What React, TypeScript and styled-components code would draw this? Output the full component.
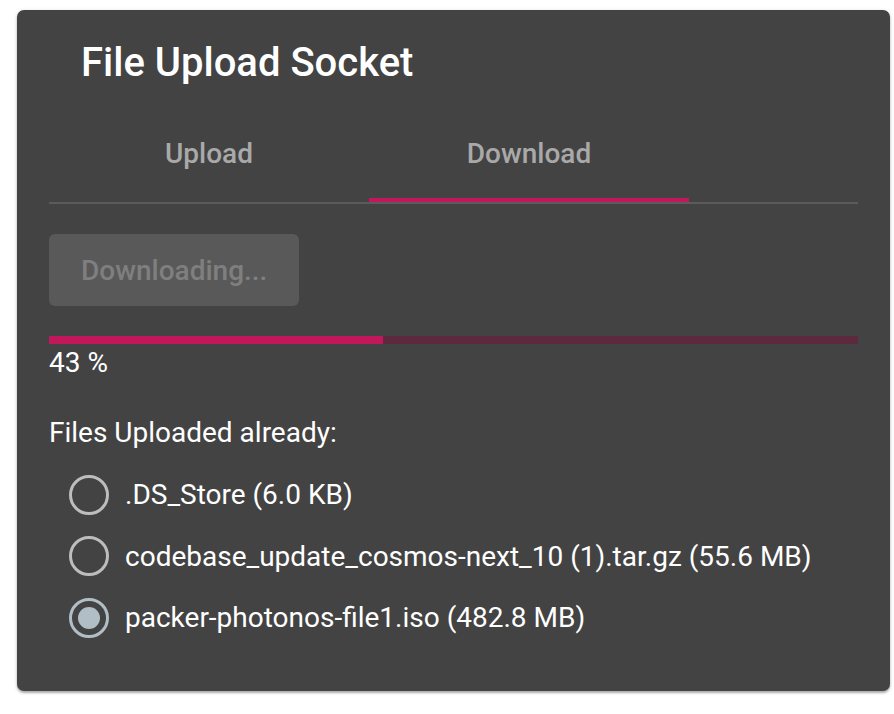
import React from "react";
import styled, { createGlobalStyle } from "styled-components";

const GlobalStyle = createGlobalStyle`
  html, body {
    margin: 0;
    padding: 0;
    background: #ffffff;
  }
  body {
    font-family: Roboto, "Liberation Sans", Arial, sans-serif;
  }
`;

const Page = styled.div`
  padding: 10px 4px 23px 17px;
`;

const Card = styled.div`
  box-sizing: border-box;
  width: 873px;
  height: 681px;
  background: #434343;
  border-radius: 7px;
  box-shadow: 0 2px 2px rgba(0, 0, 0, 0.25), 0 1px 4px rgba(0, 0, 0, 0.15);
  padding: 29px 32px 0 32px;
  color: #ffffff;
`;

const Title = styled.h1`
  margin: 0 0 0 32px;
  font-size: 40px;
  line-height: 48px;
  font-weight: 500;
  color: #ffffff;
`;

const TabBar = styled.div`
  display: flex;
  margin-top: 29px;
  border-bottom: 2px solid #5b5b5b;
`;

const Tab = styled.div<{ $active?: boolean }>`
  box-sizing: border-box;
  width: 320px;
  height: 86px;
  padding-top: 22px;
  text-align: center;
  font-size: 28px;
  line-height: 32px;
  font-weight: 500;
  color: #a9a9a9;
  border-bottom: 4px solid ${(p) => (p.$active ? "#c2185b" : "transparent")};
`;

const Button = styled.button`
  display: block;
  margin-top: 30px;
  height: 72px;
  padding: 0 32px;
  border: none;
  border-radius: 6px;
  background: #595959;
  color: #7f7f7f;
  font-family: inherit;
  font-size: 28px;
  font-weight: 500;
`;

const Track = styled.div`
  margin-top: 30px;
  height: 8px;
  background: #5c2a3c;
`;

const Fill = styled.div`
  height: 100%;
  background: #c2185b;
`;

const Percent = styled.div`
  margin-top: 3px;
  font-size: 28px;
  line-height: 32px;
`;

const Label = styled.div`
  margin-top: 38px;
  font-size: 28px;
  line-height: 32px;
`;

const List = styled.div`
  margin-top: 15px;
  display: flex;
  flex-direction: column;
`;

const Row = styled.label`
  display: flex;
  align-items: center;
  height: 61.5px;
  padding-left: 20px;
  gap: 16px;
  font-size: 28px;
`;

const Circle = styled.span<{ $checked?: boolean }>`
  box-sizing: border-box;
  flex: none;
  width: 40px;
  height: 40px;
  border-radius: 50%;
  border: 3px solid ${(p) => (p.$checked ? "#b0bec5" : "#bdbdbd")};
  display: flex;
  align-items: center;
  justify-content: center;
  &::after {
    content: "";
    display: ${(p) => (p.$checked ? "block" : "none")};
    width: 22px;
    height: 22px;
    border-radius: 50%;
    background: #b0bec5;
  }
`;

const files = [
  { name: ".DS_Store", size: "6.0 KB" },
  { name: "codebase_update_cosmos-next_10 (1).tar.gz", size: "55.6 MB" },
  { name: "packer-photonos-file1.iso", size: "482.8 MB" },
];

const App: React.FC = () => {
  const selected = 2;
  const progress = 41.3;
  return (
    <>
      <GlobalStyle />
      <Page>
        <Card>
          <Title>File Upload Socket</Title>
          <TabBar>
            <Tab>Upload</Tab>
            <Tab $active>Download</Tab>
          </TabBar>
          <Button disabled>Downloading...</Button>
          <Track>
            <Fill style={{ width: `${progress}%` }} />
          </Track>
          <Percent>43 %</Percent>
          <Label>Files Uploaded already:</Label>
          <List>
            {files.map((f, i) => (
              <Row key={f.name}>
                <Circle $checked={i === selected} />
                <span>
                  {f.name} ({f.size})
                </span>
              </Row>
            ))}
          </List>
        </Card>
      </Page>
    </>
  );
};

export default App;
